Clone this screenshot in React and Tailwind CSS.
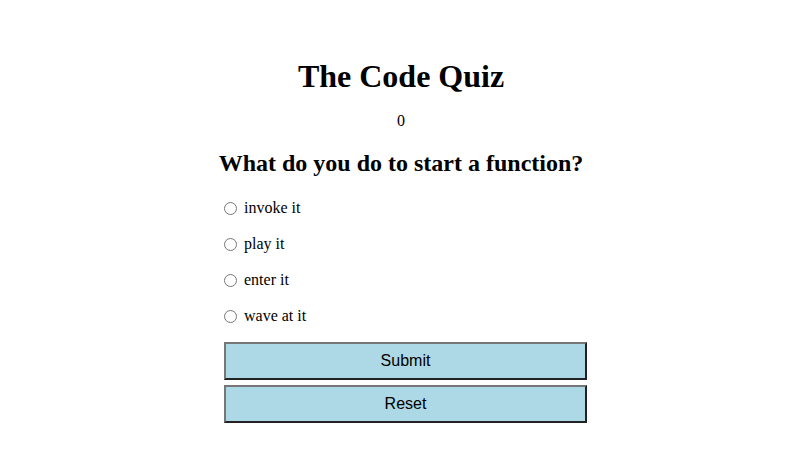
import React from 'react';

const answers = ['invoke it', 'play it', 'enter it', 'wave at it'];

export default function App() {
    return (
        <div className="min-h-[471px] bg-white text-black font-['Liberation_Serif',serif]">
            <div className="w-[372px] mx-auto pt-[58px] flex flex-col items-stretch">
                <h1 className="text-[32px] font-bold text-center leading-[37px]">The Code Quiz</h1>
                <p className="text-base text-center mt-[17px] leading-[18px]">0</p>
                <h2 className="text-2xl font-bold text-center mt-[19px] leading-[28px] whitespace-nowrap -mx-10">
                    What do you do to start a function?
                </h2>
                <div className="mt-[22px] pl-[9px] flex flex-col gap-[18px]">
                    {answers.map((a) => (
                        <label key={a} className="flex items-center h-[18px] text-base">
                            <input type="radio" name="answer" className="w-[13px] h-[13px] m-0 mr-[7px]" />
                            <span>{a}</span>
                        </label>
                    ))}
                </div>
                <div className="mt-[17px] pl-[9px] flex flex-col gap-[5px]">
                    <button className="h-[38px] w-full bg-[#add8e6] border-2 border-t-[#767676] border-l-[#767676] border-r-[#222] border-b-[#222] font-['Liberation_Sans',sans-serif] text-base">
                        Submit
                    </button>
                    <button className="h-[38px] w-full bg-[#add8e6] border-2 border-t-[#767676] border-l-[#767676] border-r-[#222] border-b-[#222] font-['Liberation_Sans',sans-serif] text-base">
                        Reset
                    </button>
                </div>
            </div>
        </div>
    );
}
